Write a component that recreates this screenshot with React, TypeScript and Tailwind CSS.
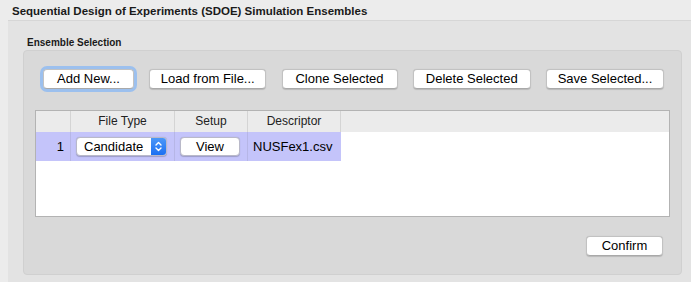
const font = { fontFamily: '"Liberation Sans", Arial, sans-serif' };

function MacButton({ label, width, focused }: { label: string; width: number; focused?: boolean }) {
  return (
    <button
      className={
        'h-[20px] rounded-[4px] border border-[#c2c2c2] border-b-[#a9a9a9] bg-white text-[13px] leading-[18px] text-black shadow-[0_0.5px_1px_rgba(0,0,0,0.15)] ' +
        (focused ? 'ring-[3px] ring-[#9cc0ee]' : '')
      }
      style={{ width }}
    >
      {label}
    </button>
  );
}

export default function App() {
  return (
    <div className="w-[691px] h-[282px] overflow-hidden bg-[#ececec] text-black" style={font}>
      <div className="pl-[12px] pt-[4px] h-[20px] text-[11.5px] font-bold leading-[14px] text-[#1a1a1a]">
        Sequential Design of Experiments (SDOE) Simulation Ensembles
      </div>
      <div className="ml-[8px] h-[262px] border-t border-[#d6d6d6] bg-[#e3e3e3] pl-[15px] pr-[9px]">
        <div className="pl-[4px] pt-[16px] h-[29px] text-[10px] font-bold leading-[12px] text-[#1a1a1a]">
          Ensemble Selection
        </div>
        <div className="h-[225px] rounded-[4px] border border-[#d0d0d0] bg-[#d9d9d9] pt-[18px]">
          <div className="flex justify-between pl-[19px] pr-[17px]">
            <MacButton label="Add New..." width={91} focused />
            <MacButton label="Load from File..." width={117} />
            <MacButton label="Clone Selected" width={116} />
            <MacButton label="Delete Selected" width={118} />
            <MacButton label="Save Selected..." width={118} />
          </div>
          <div className="mx-[11px] mt-[21px] h-[107px] border border-[#b3b3b3] bg-white">
            <div className="flex h-[21px] bg-[#ebebeb] text-[12px] leading-[21px] text-[#222]">
              <div className="w-[35px] border-r border-[#d4d4d4]" />
              <div className="w-[104px] border-r border-[#d4d4d4] text-center">File Type</div>
              <div className="w-[73px] border-r border-[#d4d4d4] text-center">Setup</div>
              <div className="w-[93px] border-r border-[#d4d4d4] text-center">Descriptor</div>
            </div>
            <div className="flex h-[29px] w-[305px] items-center bg-[#c4c4fa] text-[13px]">
              <div className="h-full w-[35px] border-r border-[#b6b6e6] pr-[6px] text-right leading-[29px]">1</div>
              <div className="flex h-full w-[104px] items-center border-r border-[#b6b6e6] pl-[5px]">
                <div className="flex h-[19px] w-[91px] overflow-hidden rounded-[4px] border border-[#b9b9c9] bg-white shadow-[0_0.5px_1px_rgba(0,0,0,0.2)]">
                  <div className="flex-1 pl-[7px] leading-[17px]">Candidate</div>
                  <div className="flex w-[15px] items-center justify-center bg-gradient-to-b from-[#4b97f8] to-[#1a6ff2]">
                    <svg width="7" height="11" viewBox="0 0 7 11" fill="none" stroke="white" strokeWidth="1.4" strokeLinecap="round" strokeLinejoin="round">
                      <path d="M1 4 L3.5 1.5 L6 4" />
                      <path d="M1 7 L3.5 9.5 L6 7" />
                    </svg>
                  </div>
                </div>
              </div>
              <div className="flex h-full w-[73px] items-center border-r border-[#b6b6e6] pl-[5px]">
                <div className="h-[19px] w-[60px] rounded-[4px] border border-[#b9b9c9] bg-white text-center leading-[17px] shadow-[0_0.5px_1px_rgba(0,0,0,0.2)]">
                  View
                </div>
              </div>
              <div className="flex h-full w-[93px] items-center pl-[5px]">NUSFex1.csv</div>
            </div>
          </div>
          <div className="flex justify-end pr-[18px] pt-[19px]">
            <MacButton label="Confirm" width={77} />
          </div>
        </div>
      </div>
    </div>
  );
}
